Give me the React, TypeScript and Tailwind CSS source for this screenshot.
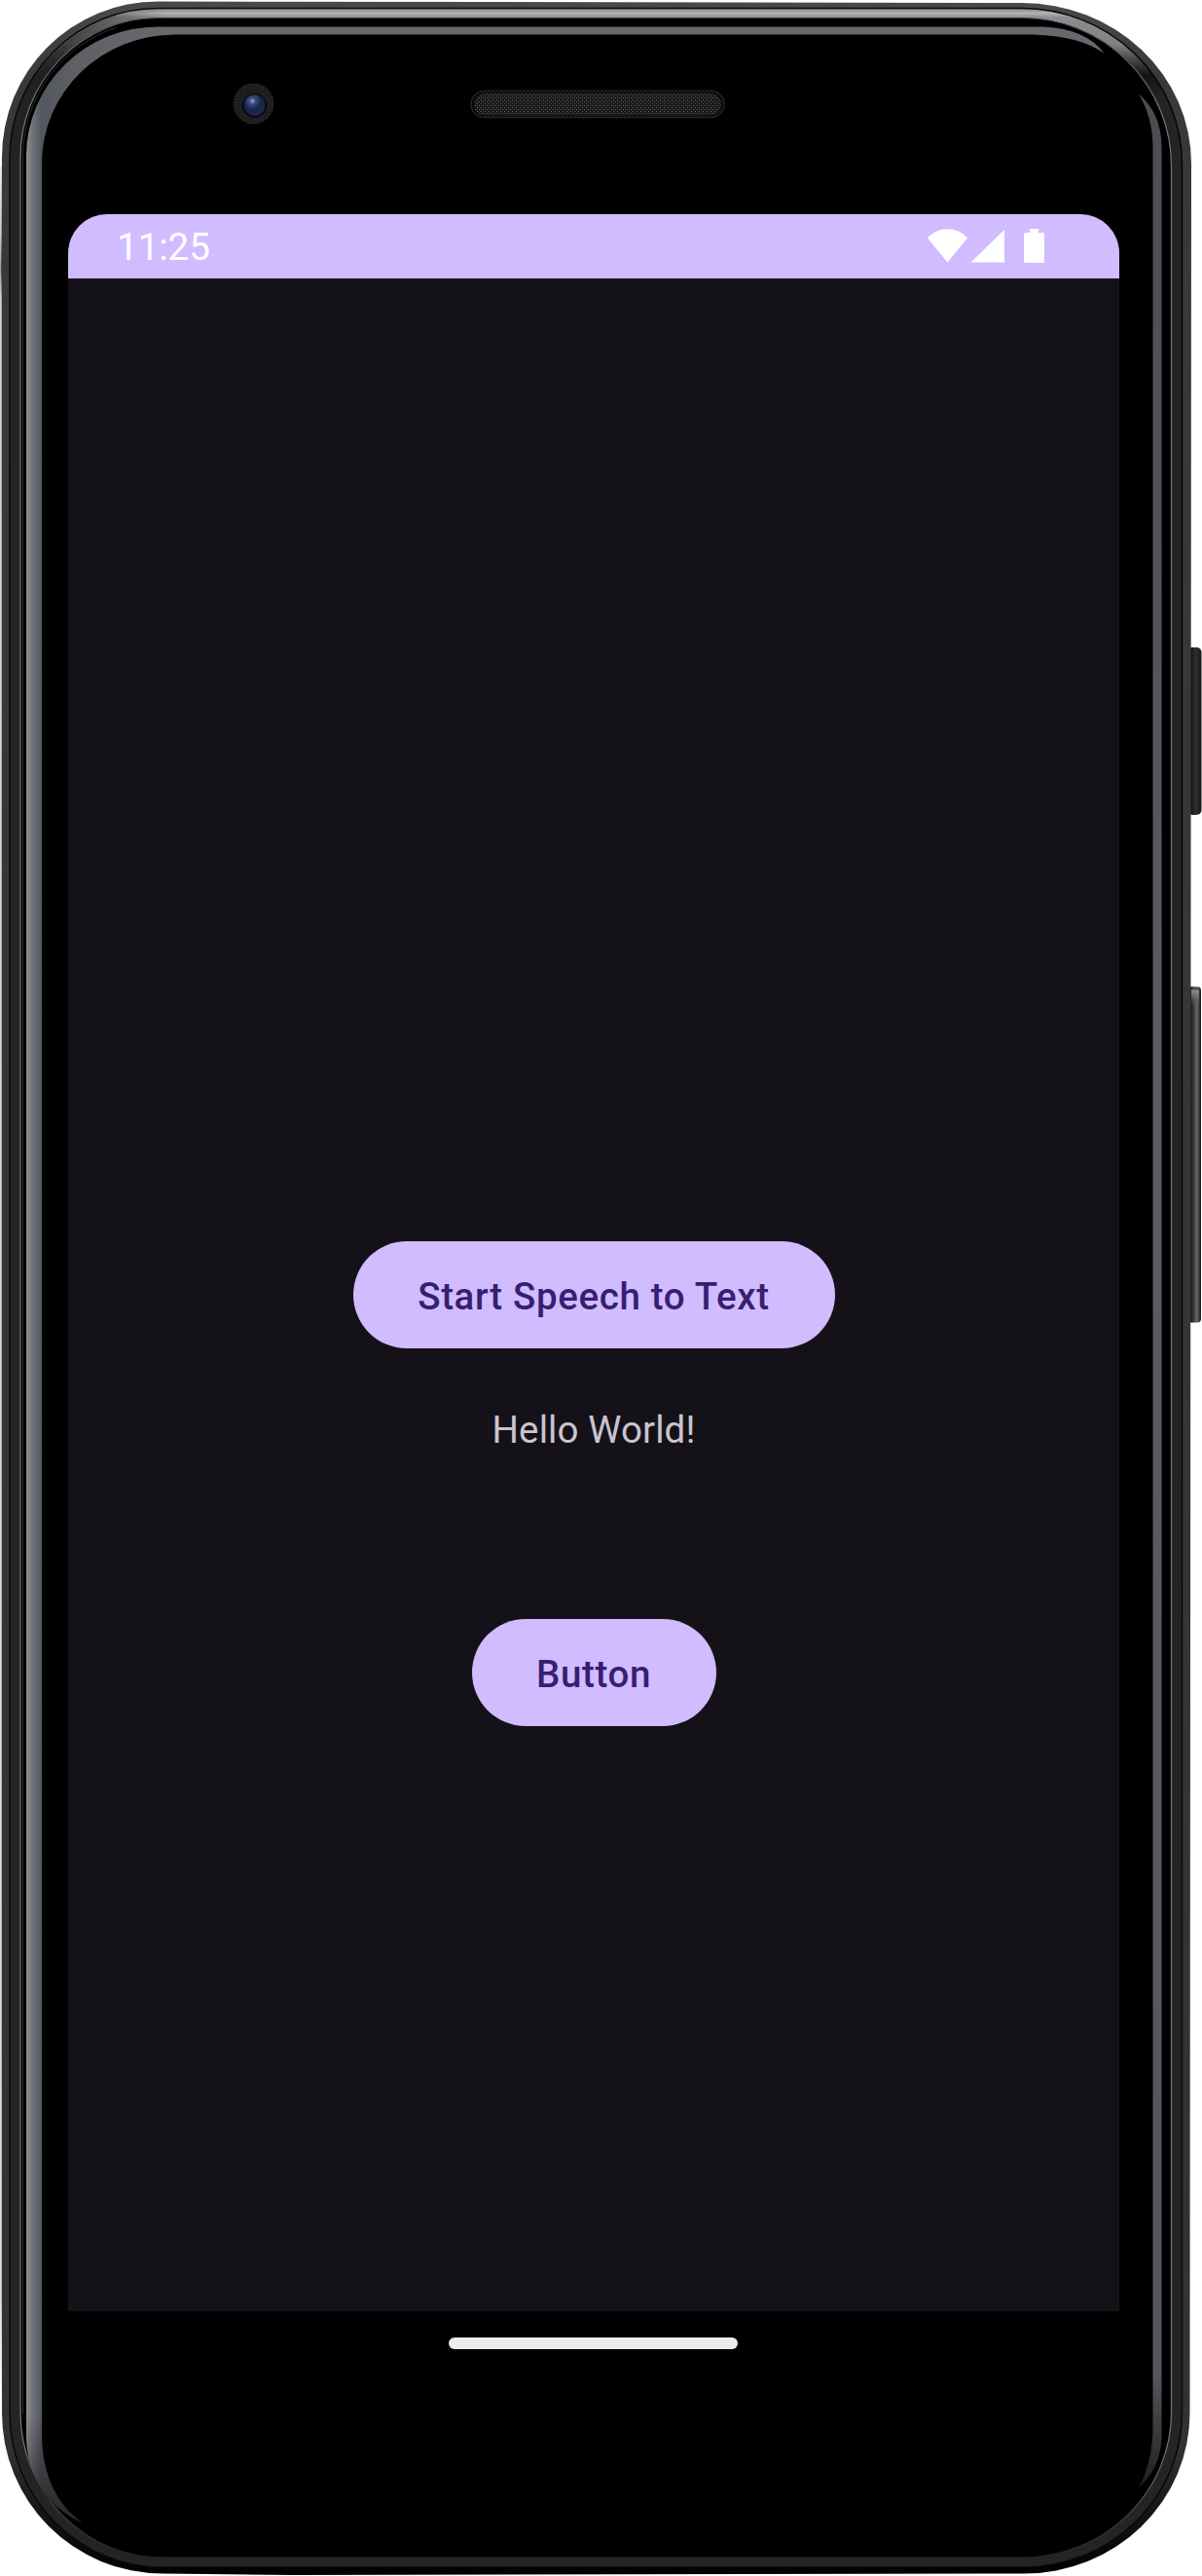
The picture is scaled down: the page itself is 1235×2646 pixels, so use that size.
import React from "react";

function PhoneBody() {
  return (
    <svg className="absolute inset-0" width="1235" height="2646" viewBox="0 0 1235 2646" fill="none" aria-hidden="true">
      <defs>
        <linearGradient id="rim" gradientUnits="userSpaceOnUse" x1="0" y1="0" x2="0" y2="2646">
          <stop offset="0" stopColor="#4a4a4a" />
          <stop offset="0.03" stopColor="#3a3838" />
          <stop offset="0.95" stopColor="#343131" />
          <stop offset="0.975" stopColor="#161616" />
          <stop offset="1" stopColor="#000" />
        </linearGradient>
        <linearGradient id="rimSliver" gradientUnits="userSpaceOnUse" x1="0" y1="170" x2="0" y2="2470">
          <stop offset="0" stopColor="#999" stopOpacity="0.3" />
          <stop offset="0.03" stopColor="#999" />
          <stop offset="0.046" stopColor="#444" />
          <stop offset="0.06" stopColor="#aaa" />
          <stop offset="0.95" stopColor="#bbb" />
          <stop offset="1" stopColor="#fff" />
        </linearGradient>
        <linearGradient id="band" gradientUnits="userSpaceOnUse" x1="0" y1="9" x2="0" y2="100">
          <stop offset="0" stopColor="#85878a" />
          <stop offset="0.05" stopColor="#b0b2b5" />
          <stop offset="0.1" stopColor="#8a8c90" />
          <stop offset="0.4" stopColor="#808286" />
          <stop offset="0.62" stopColor="#3a3a3b" />
          <stop offset="0.75" stopColor="#141414" />
          <stop offset="1" stopColor="#242424" />
        </linearGradient>
        <linearGradient id="shade" gradientUnits="userSpaceOnUse" x1="40" y1="0" x2="170" y2="0">
          <stop offset="0" stopColor="#222" stopOpacity="0.9" />
          <stop offset="1" stopColor="#222" stopOpacity="0" />
        </linearGradient>
        <linearGradient id="edge" gradientUnits="userSpaceOnUse" x1="0" y1="0" x2="0" y2="2646">
          <stop offset="0" stopColor="#333" />
          <stop offset="0.04" stopColor="#777" />
          <stop offset="0.95" stopColor="#777" />
          <stop offset="1" stopColor="#141414" />
        </linearGradient>
        <linearGradient id="glareLeft" gradientUnits="userSpaceOnUse" x1="26" y1="0" x2="150" y2="0">
          <stop offset="0" stopColor="#929598" />
          <stop offset="0.06" stopColor="#70747a" />
          <stop offset="0.135" stopColor="#53565e" />
          <stop offset="0.4" stopColor="#5f6066" />
          <stop offset="1" stopColor="#66686e" />
        </linearGradient>
        <linearGradient id="glareFade" gradientUnits="userSpaceOnUse" x1="0" y1="2480" x2="0" y2="2592">
          <stop offset="0" stopColor="#000" stopOpacity="0" />
          <stop offset="1" stopColor="#000" stopOpacity="0.6" />
        </linearGradient>
        <linearGradient id="glareRight" gradientUnits="userSpaceOnUse" x1="0" y1="100" x2="0" y2="2560">
          <stop offset="0" stopColor="#4c4c52" />
          <stop offset="0.4" stopColor="#5a5c62" />
          <stop offset="0.95" stopColor="#56575c" />
          <stop offset="1" stopColor="#1c1c1e" />
        </linearGradient>
        <linearGradient id="key" gradientUnits="userSpaceOnUse" x1="1222" y1="0" x2="1235" y2="0">
          <stop offset="0" stopColor="#0a0a0a" />
          <stop offset="0.5" stopColor="#2e2e2e" />
          <stop offset="1" stopColor="#161616" />
        </linearGradient>
        <linearGradient id="longKey" gradientUnits="userSpaceOnUse" x1="1222" y1="0" x2="1234" y2="0">
          <stop offset="0" stopColor="#0a0a0a" />
          <stop offset="0.35" stopColor="#383838" />
          <stop offset="0.65" stopColor="#686868" />
          <stop offset="1" stopColor="#161616" />
        </linearGradient>
        <linearGradient id="keyTip" gradientUnits="userSpaceOnUse" x1="0" y1="1014" x2="0" y2="1034">
          <stop offset="0" stopColor="#222" />
          <stop offset="0.2" stopColor="#8a8a8a" />
          <stop offset="1" stopColor="#5a5a5a" stopOpacity="0" />
        </linearGradient>
        <radialGradient id="lens" cx="0.4" cy="0.3" r="0.7">
          <stop offset="0" stopColor="#9aa6cc" />
          <stop offset="0.22" stopColor="#3b4a80" />
          <stop offset="0.6" stopColor="#18234a" />
          <stop offset="1" stopColor="#1e2b50" />
        </radialGradient>
        <pattern id="mesh" width="4" height="4" patternUnits="userSpaceOnUse">
          <rect width="4" height="4" fill="#191a1a" />
          <rect width="1" height="1" fill="#5c5e5e" />
          <rect x="2" y="2" width="1" height="1" fill="#5c5e5e" />
          <rect x="2" y="0" width="1" height="1" fill="#303131" />
        </pattern>
        <pattern id="grain" width="3" height="3" patternUnits="userSpaceOnUse">
          <rect width="3" height="3" fill="#1e1e20" />
          <rect width="1" height="1" fill="#2b2b2d" />
          <rect x="2" y="1" width="1" height="1" fill="#141416" />
        </pattern>
      </defs>

      <rect x="1220" y="665" width="14.5" height="172" rx="5" fill="url(#key)" />
      <rect x="1220" y="1013.500" width="14" height="345" rx="4" fill="url(#longKey)" />
      <rect x="1224" y="1015" width="8" height="19" rx="3" fill="url(#keyTip)" />

      <rect x="0.500" y="170" width="2" height="2300" fill="url(#rimSliver)" />
      <path d="M162 1.500L1050 3A174 165 0 0 1 1224 168L1222.500 2478A170 165 0 0 1 1052 2643.500L300 2645L167 2643.500A165 165 0 0 1 2 2478V162A160 160 0 0 1 162 1.500Z" fill="url(#rim)" />
      <path d="M162 8.500H1050A165 160 0 0 1 1214.500 168V2478A163 159 0 0 1 1052 2637H167A157 159 0 0 1 10 2478V162A152 154 0 0 1 162 8.500Z" fill="url(#band)" stroke="#080808" strokeWidth="1.500" />
      <path d="M170 9.500H162A151 153 0 0 0 11 162H20A142 144 0 0 1 162 18H170Z" fill="url(#shade)" />
      <path d="M162 18.500H1050A153 152 0 0 1 1203.500 170V2478A153 149 0 0 1 1052 2627H167A146 149 0 0 1 21 2478V162A141 143 0 0 1 162 18.500Z" fill="#000" stroke="url(#edge)" strokeWidth="1.200" />
      <path d="M23.500 2480V162A139 140 0 0 1 120 28" stroke="#2c2c2c" strokeWidth="1" />

      <path d="M27 160A135 133 0 0 1 162 27.500H1070Q1116 29 1134.500 55Q1110 37 1062 35.500H180A137 132 0 0 0 43 168V2505Q45 2563 85 2592Q29 2565 27 2505Z" fill="url(#glareLeft)" />
      <path d="M26 2480V2505Q28 2566 86 2593Q46 2563 44 2505V2480Z" fill="url(#glareFade)" />
      <path d="M1169.500 96Q1193 116 1193.500 150V2505Q1192 2536 1170 2555Q1184 2530 1184.500 2495V150Q1184 119 1169.500 96Z" fill="url(#glareRight)" />

      <circle cx="260.500" cy="106.500" r="21" fill="url(#grain)" />
      <circle cx="261.500" cy="108.500" r="12.500" fill="#08090d" />
      <circle cx="261.500" cy="108" r="10.800" fill="url(#lens)" />

      <rect x="484" y="93.500" width="260" height="27" rx="13.500" fill="#080808" stroke="#24242a" strokeWidth="1.500" />
      <rect x="487" y="96" width="254" height="22.500" rx="11" fill="url(#mesh)" />
    </svg>
  );
}

function StatusIcons() {
  return (
    <svg width="122" height="36" viewBox="0 0 122 36" fill="#fff" aria-label="Wi-Fi, signal and battery">
      <path d="M0 9.500C11 -2.700 30 -2.700 41 9.500L20.500 34.500Z" />
      <path d="M79 1V34.500H44.500Z" />
      <path d="M105 0h9v4h4.500q1.500 0 1.500 1.500V33.500q0 1.500-1.500 1.500H100.500q-1.500 0-1.500-1.500V5.500q0-1.500 1.500-1.500H105Z" />
    </svg>
  );
}

function PillButton({ children, className }: { children: React.ReactNode; className: string }) {
  return (
    <button
      className={
        "flex h-[110px] shrink-0 items-center justify-center rounded-full bg-[#d0bcff] pt-[4px] text-[38.5px] font-medium leading-none tracking-[0.66px] text-[#381e72] " +
        className
      }
    >
      {children}
    </button>
  );
}

export default function App() {
  return (
    <div className="relative h-[2646px] w-[1235px] overflow-hidden bg-white font-['Roboto',sans-serif]">
      <PhoneBody />
      <div className="relative ml-[70px] flex w-[1080px] flex-col items-center pt-[220px]">
        <main className="flex h-[2154px] w-full flex-col items-center overflow-hidden rounded-t-[40px] bg-[#141218]">
          <header className="flex h-[66px] w-full shrink-0 items-center justify-between bg-[#d0bcff] pl-[50px] pr-[75px] text-white">
            <span className="pt-[3px] text-[38.5px] leading-none">11:25</span>
            <StatusIcons />
          </header>
          <PillButton className="mt-[989px] w-[495px]">Start Speech to Text</PillButton>
          <p className="mt-[64px] text-[38.5px] leading-[40px] tracking-[0.1px] text-[#cac4d0]">Hello World!</p>
          <PillButton className="mt-[174px] w-[251px]">Button</PillButton>
        </main>
        <div className="mr-[1px] mt-[27px] h-[12px] w-[297px] rounded-full bg-[#ebebeb]" />
      </div>
    </div>
  );
}
